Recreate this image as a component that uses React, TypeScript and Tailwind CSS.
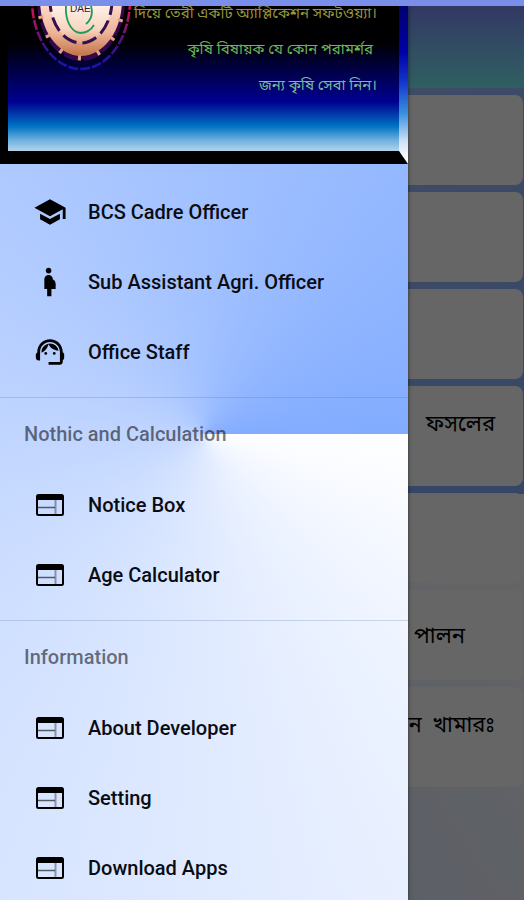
import type { ComponentType } from "react";
import { MdPregnantWoman, MdSchool, MdSupportAgent } from "react-icons/md";

type Entry = { label: string; icon: ComponentType<{ className?: string }> };
type Section = { title?: string; entries: Entry[] };

function WebIcon({ className }: { className?: string }) {
  return (
    <svg viewBox="0 0 34 34" className={className} aria-hidden="true" fill="none">
      <rect x="4" y="7" width="26" height="20" rx="1.5" stroke="currentColor" strokeWidth="2" />
      <path d="M4 7h26v5H4z" fill="currentColor" />
      <path d="M5 19.5h17" stroke="currentColor" strokeOpacity="0.6" strokeWidth="1.5" />
      <path d="M22.5 12v14" stroke="currentColor" strokeOpacity="0.35" strokeWidth="2" />
    </svg>
  );
}

const sections: Section[] = [
  {
    entries: [
      { label: "BCS Cadre Officer", icon: MdSchool },
      { label: "Sub Assistant Agri. Officer", icon: MdPregnantWoman },
      { label: "Office Staff", icon: MdSupportAgent },
    ],
  },
  {
    title: "Nothic and Calculation",
    entries: [
      { label: "Notice Box", icon: WebIcon },
      { label: "Age Calculator", icon: WebIcon },
    ],
  },
  {
    title: "Information",
    entries: [
      { label: "About Developer", icon: WebIcon },
      { label: "Setting", icon: WebIcon },
      { label: "Download Apps", icon: WebIcon },
    ],
  },
];

const cards = [
  { text: "", style: "h-[90px]" },
  { text: "", style: "h-[90px]" },
  { text: "", style: "h-[90px]" },
  { text: "ফসলের", style: "h-[100px] pt-5 pr-7" },
  { text: "", style: "h-[90px]" },
  { text: "পালন", style: "h-[90px] pt-7 pr-[58px]" },
  { text: "ন  খামারঃ", style: "h-[100px] pt-5 pr-7" },
];

function BannerArt() {
  return (
    <svg
      className="absolute inset-0 h-full w-full"
      viewBox="0 6 408 158"
      preserveAspectRatio="none"
      aria-hidden="true"
    >
      <defs>
        <linearGradient id="sky" gradientUnits="userSpaceOnUse" x1="0" y1="6" x2="0" y2="151">
          <stop offset="0" stopColor="#000000" />
          <stop offset="0.26" stopColor="#000004" />
          <stop offset="0.45" stopColor="#000048" />
          <stop offset="0.66" stopColor="#000090" />
          <stop offset="0.83" stopColor="#0073c4" />
          <stop offset="0.92" stopColor="#68aede" />
          <stop offset="1" stopColor="#b4d4ea" />
        </linearGradient>
        <linearGradient id="edge" gradientUnits="userSpaceOnUse" x1="0" y1="6" x2="0" y2="160">
          <stop offset="0" stopColor="#000070" />
          <stop offset="0.3" stopColor="#0000a8" />
          <stop offset="0.5" stopColor="#1438cc" />
          <stop offset="0.7" stopColor="#3a92e0" />
          <stop offset="0.88" stopColor="#cfe2f5" />
          <stop offset="1" stopColor="#ffffff" />
        </linearGradient>
        <linearGradient id="ring" gradientUnits="userSpaceOnUse" x1="0" y1="6" x2="0" y2="71">
          <stop offset="0" stopColor="#d8104a" />
          <stop offset="0.3" stopColor="#9c1468" />
          <stop offset="0.6" stopColor="#401090" />
          <stop offset="1" stopColor="#1414b0" />
        </linearGradient>
        <linearGradient id="copper" gradientUnits="userSpaceOnUse" x1="0" y1="6" x2="0" y2="60">
          <stop offset="0" stopColor="#fbd8c6" />
          <stop offset="0.5" stopColor="#eeb497" />
          <stop offset="1" stopColor="#b8683a" />
        </linearGradient>
        <linearGradient id="disc" gradientUnits="userSpaceOnUse" x1="0" y1="6" x2="0" y2="44">
          <stop offset="0" stopColor="#fff0e6" />
          <stop offset="0.6" stopColor="#f9d6c2" />
          <stop offset="1" stopColor="#e0a07a" />
        </linearGradient>
      </defs>
      <rect x="0" y="6" width="408" height="158" fill="#000" />
      <rect x="8" y="6" width="391" height="145" fill="url(#sky)" />
      <path d="M399 6h9v158L399 151z" fill="url(#edge)" />
      <ellipse cx="81" cy="0" rx="49" ry="69" fill="none" stroke="url(#ring)" strokeWidth="2.5" strokeDasharray="10 2" />
      <ellipse cx="81" cy="0" rx="42" ry="59" fill="#33084f" stroke="#33084f" strokeWidth="4" strokeDasharray="17 3" />
      <ellipse cx="81" cy="0" rx="41" ry="56" fill="url(#copper)" />
      <ellipse cx="81" cy="0" rx="42" ry="58" fill="none" stroke="#e6a27c" strokeWidth="5" strokeDasharray="3 17" strokeDashoffset="1" />
      <ellipse cx="81" cy="0" rx="31" ry="43" fill="url(#disc)" stroke="#34104e" strokeWidth="3" strokeDasharray="15 6" />
      <path d="M66 6c-1 14 5 26 14 27 6 0 11-3 14-8" fill="none" stroke="#1b9b5c" strokeWidth="1.8" />
      <path d="M91 6c2 7 1 13-5 18" fill="none" stroke="#1b9b5c" strokeWidth="1.8" />
      <text x="70" y="12" fill="#2a2530" fontFamily="Liberation Sans, sans-serif" fontSize="10">
        DAE
      </text>
    </svg>
  );
}

function Banner() {
  return (
    <header className="relative h-[158px] overflow-hidden">
      <BannerArt />
      <div className="relative flex h-full flex-col items-end justify-end pr-[31px] pb-[61px] text-[15px] leading-9 whitespace-nowrap">
        <p className="text-[#94943a]">দিয়ে তেরী একটি অ্যাপ্লিকেশন সফটওয়্যা।</p>
        <p className="pr-1 text-[#6cb456]">কৃষি বিষায়ক যে কোন পরামর্শর</p>
        <p className="text-[#78b89c]">জন্য কৃষি সেবা নিন।</p>
      </div>
    </header>
  );
}

function DrawerSection({ title, entries }: Section) {
  return (
    <section className={title ? "mt-[10px] border-t border-[#5070a0]/25" : "pt-[13px]"}>
      {title && (
        <h2 className="flex h-[72px] items-center px-6 text-[20px] font-medium text-black/55">{title}</h2>
      )}
      <ul>
        {entries.map(({ label, icon: Icon }) => (
          <li key={label}>
            <button
              type="button"
              className="flex h-[70px] w-full items-center gap-[21px] pl-[33px] text-left text-[20px] font-medium text-[#0a0c12]"
            >
              <Icon className="size-[34px] shrink-0 text-black" />
              {label}
            </button>
          </li>
        ))}
      </ul>
    </section>
  );
}

export default function App() {
  return (
    <div className="flex h-screen flex-col overflow-hidden bg-[#7a8fea] font-[Roboto,'Noto_Sans_Bengali','Noto_Sans',sans-serif]">
      <div className="h-1.5 shrink-0" />
      <div className="relative min-h-0 flex-1 overflow-hidden">
        <main className="flex h-full flex-col">
          <div className="h-[82px] shrink-0 bg-linear-to-b from-[#7d8dfa] to-[#76eef0]" />
          <div className="flex flex-1 flex-col gap-[7px] bg-[conic-gradient(from_90deg_at_50%_50%,#ffffff,#85aeff)] pt-[7px] pr-px">
            {cards.map((card, i) => (
              <article
                key={i}
                className={`shrink-0 rounded-lg bg-white text-right text-[22px] leading-9 whitespace-pre text-black ${card.style}`}
              >
                {card.text}
              </article>
            ))}
          </div>
        </main>
        <div className="absolute inset-0 bg-black/60" />
        <nav
          aria-label="Main menu"
          className="absolute inset-y-0 left-0 w-[408px] max-w-full overflow-hidden bg-[conic-gradient(from_90deg_at_204px_428px,#ffffff,#82acff)] shadow-[0_0_4px_#00000090]"
        >
          <Banner />
          {sections.map((section, i) => (
            <DrawerSection key={i} {...section} />
          ))}
        </nav>
      </div>
    </div>
  );
}
